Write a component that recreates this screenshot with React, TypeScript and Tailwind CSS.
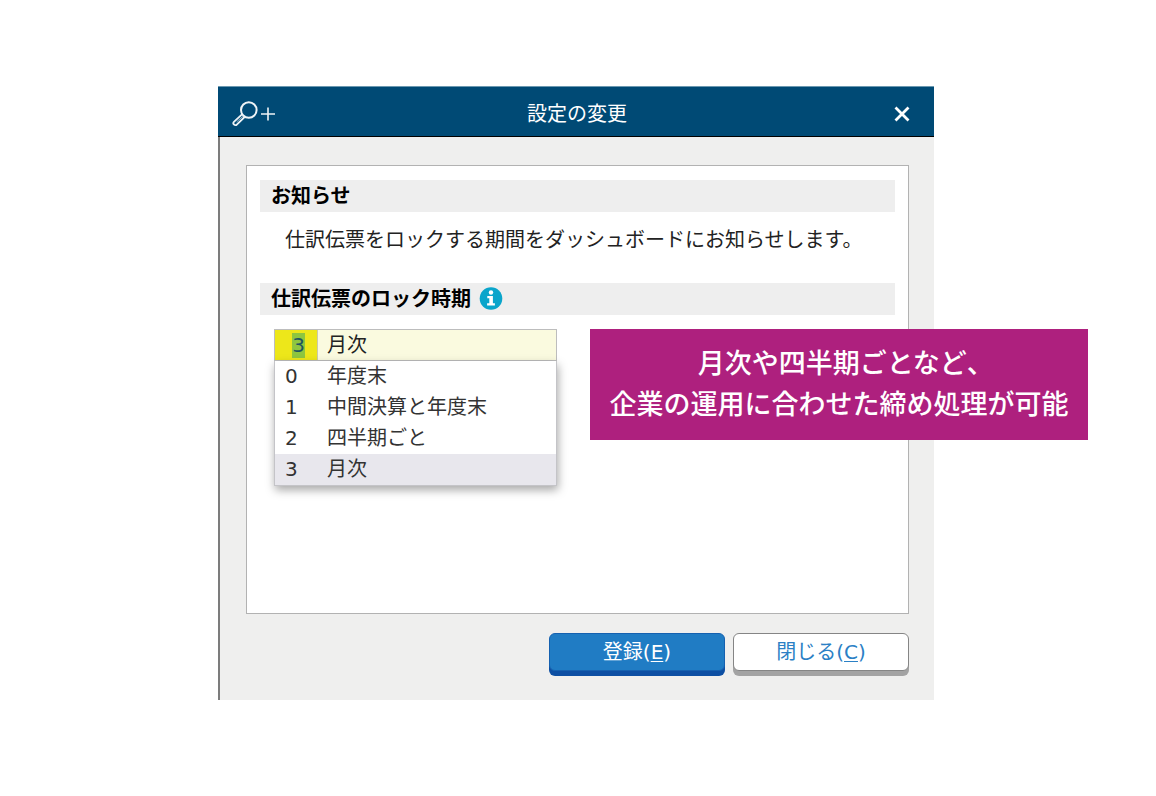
import { useState } from "react";

const lockPeriods = [
  { code: "0", name: "年度末" },
  { code: "1", name: "中間決算と年度末" },
  { code: "2", name: "四半期ごと" },
  { code: "3", name: "月次" },
];

function SearchPlusIcon() {
  return (
    <svg width="46" height="28" viewBox="0 0 46 28" fill="none" stroke="#eef3f6" aria-hidden="true">
      <circle cx="16.8" cy="10" r="7.8" strokeWidth="2" />
      <path
        d="M10 14.4 1.9 21.9a1.8 1.8 0 0 0 0 2.5l.3.3a1.8 1.8 0 0 0 2.6-.1L12.6 17"
        strokeWidth="1.8"
        strokeLinecap="round"
        strokeLinejoin="round"
      />
      <path d="M5 21.6l5.6-5" strokeWidth="1" strokeLinecap="round" opacity="0.6" />
      <path d="M29 14h14M36 7.5v13" strokeWidth="1.6" />
    </svg>
  );
}

function InfoIcon() {
  return (
    <svg width="24" height="24" viewBox="0 0 24 24" aria-hidden="true">
      <circle cx="12" cy="11.5" r="11.3" fill="#0aa5cb" />
      <circle cx="12" cy="5.5" r="2.2" fill="#fff" />
      <path d="M8.3 9.1h5.6v7.2h2v2.2H8.1v-2.2h2.2v-5h-2z" fill="#fff" />
    </svg>
  );
}

function SectionTitle({ children }: { children: React.ReactNode }) {
  return (
    <h2 className="flex h-8 items-center gap-2 bg-[#eeeeee] pl-[11px] text-xl font-bold text-black">
      {children}
    </h2>
  );
}

function PeriodField() {
  const [code, setCode] = useState("3");

  return (
    <div className="relative ml-[14px] mt-[14px] w-[283px] max-w-full">
      <div className="flex h-8 border border-[#bdbdbd] bg-[#fafadf]">
        <div className="flex w-[43px] items-center justify-end border-r border-[#c9c9b0] bg-[#ede71a] pr-3">
          <input
            type="text"
            aria-label="ロック時期コード"
            value={code}
            onChange={(e) => setCode(e.target.value)}
            className="h-[25px] w-[13px] bg-[#8ec63f] text-center text-[#1f5560] outline-none"
          />
        </div>
        <select
          aria-label="仕訳伝票のロック時期"
          value={code}
          onChange={(e) => setCode(e.target.value)}
          className="min-w-0 flex-1 appearance-none bg-transparent pl-[9px] text-[#222222] outline-none"
        >
          {lockPeriods.map((p) => (
            <option key={p.code} value={p.code}>
              {p.name}
            </option>
          ))}
        </select>
      </div>

      <ul
        role="listbox"
        aria-label="仕訳伝票のロック時期"
        className="absolute inset-x-0 top-full border border-t-0 border-[#c4c4c8] bg-white shadow-[1px_4px_9px_rgba(0,0,0,0.35)]"
      >
        {lockPeriods.map((p) => (
          <li
            key={p.code}
            role="option"
            aria-selected={p.code === code}
            onClick={() => setCode(p.code)}
            className={`flex h-[31px] cursor-default items-center pb-0.5 pl-[10px] text-[#333333] ${
              p.code === code ? "bg-[#e8e7ed]" : "bg-white"
            }`}
          >
            <span className="w-[42px]">{p.code}</span>
            <span>{p.name}</span>
          </li>
        ))}
      </ul>
    </div>
  );
}

export default function App() {
  return (
    <main className="min-h-screen bg-white pr-1 pt-[86px] font-['DejaVu_Sans','Noto_Sans_CJK_JP',sans-serif] text-xl">
      <div role="dialog" aria-labelledby="dialog-title" className="relative mx-auto max-w-[716px] bg-[#efefee]">
        <header className="flex h-[51px] items-center justify-between border-b border-t border-b-black border-t-[#6b98b0] bg-[#004a75] pl-[14px] pr-3 pt-1 text-white">
          <button type="button" aria-label="拡大" className="w-[46px]">
            <SearchPlusIcon />
          </button>
          <h1 id="dialog-title">設定の変更</h1>
          <div className="flex w-[46px] justify-end pr-[10px]">
            <button type="button" aria-label="閉じる">
              <svg width="20" height="20" viewBox="0 0 20 20" stroke="#fff" strokeWidth="2.8" aria-hidden="true">
                <path d="M3.5 3.5l13 13M16.5 3.5l-13 13" />
              </svg>
            </button>
          </div>
        </header>

        <div className="border-l-2 border-[#7c7c7c] pb-6 pl-[26px] pr-[25px] pt-7">
          <section className="min-h-[449px] border border-[#b2b2b2] bg-white px-[13px] py-[14px]">
            <SectionTitle>お知らせ</SectionTitle>
            <p className="mb-[29px] mt-[14px] pl-[25px] leading-7 text-[#222222]">
              仕訳伝票をロックする期間をダッシュボードにお知らせします。
            </p>
            <SectionTitle>
              仕訳伝票のロック時期
              <InfoIcon />
            </SectionTitle>
            <PeriodField />
          </section>

          <div className="mt-[19px] flex justify-end gap-2">
            <button
              type="button"
              className="mb-[5px] h-[38px] w-44 rounded-md border border-[#1561b0] bg-[#207cc4] text-white shadow-[0_5px_0_#0d4fa3]"
            >
              登録(<u className="decoration-1 underline-offset-2">E</u>)
            </button>
            <button
              type="button"
              className="mb-[5px] h-[38px] w-44 rounded-md border border-[#858585] bg-white text-[#2b80c5] shadow-[0_5px_0_#a3a3a3]"
            >
              閉じる(<u className="decoration-1 underline-offset-2">C</u>)
            </button>
          </div>
        </div>

        <p className="absolute left-[372px] top-[243px] w-[498px] bg-[#ae207e] pb-[17px] pt-3 text-center font-['Noto_Sans_CJK_JP',sans-serif] text-[27px] font-medium leading-[41px] text-white">
          月次や四半期ごとなど<span className="[font-feature-settings:'halt']">、</span>
          <br />
          企業の運用に合わせた締め処理が可能
        </p>
      </div>
    </main>
  );
}
